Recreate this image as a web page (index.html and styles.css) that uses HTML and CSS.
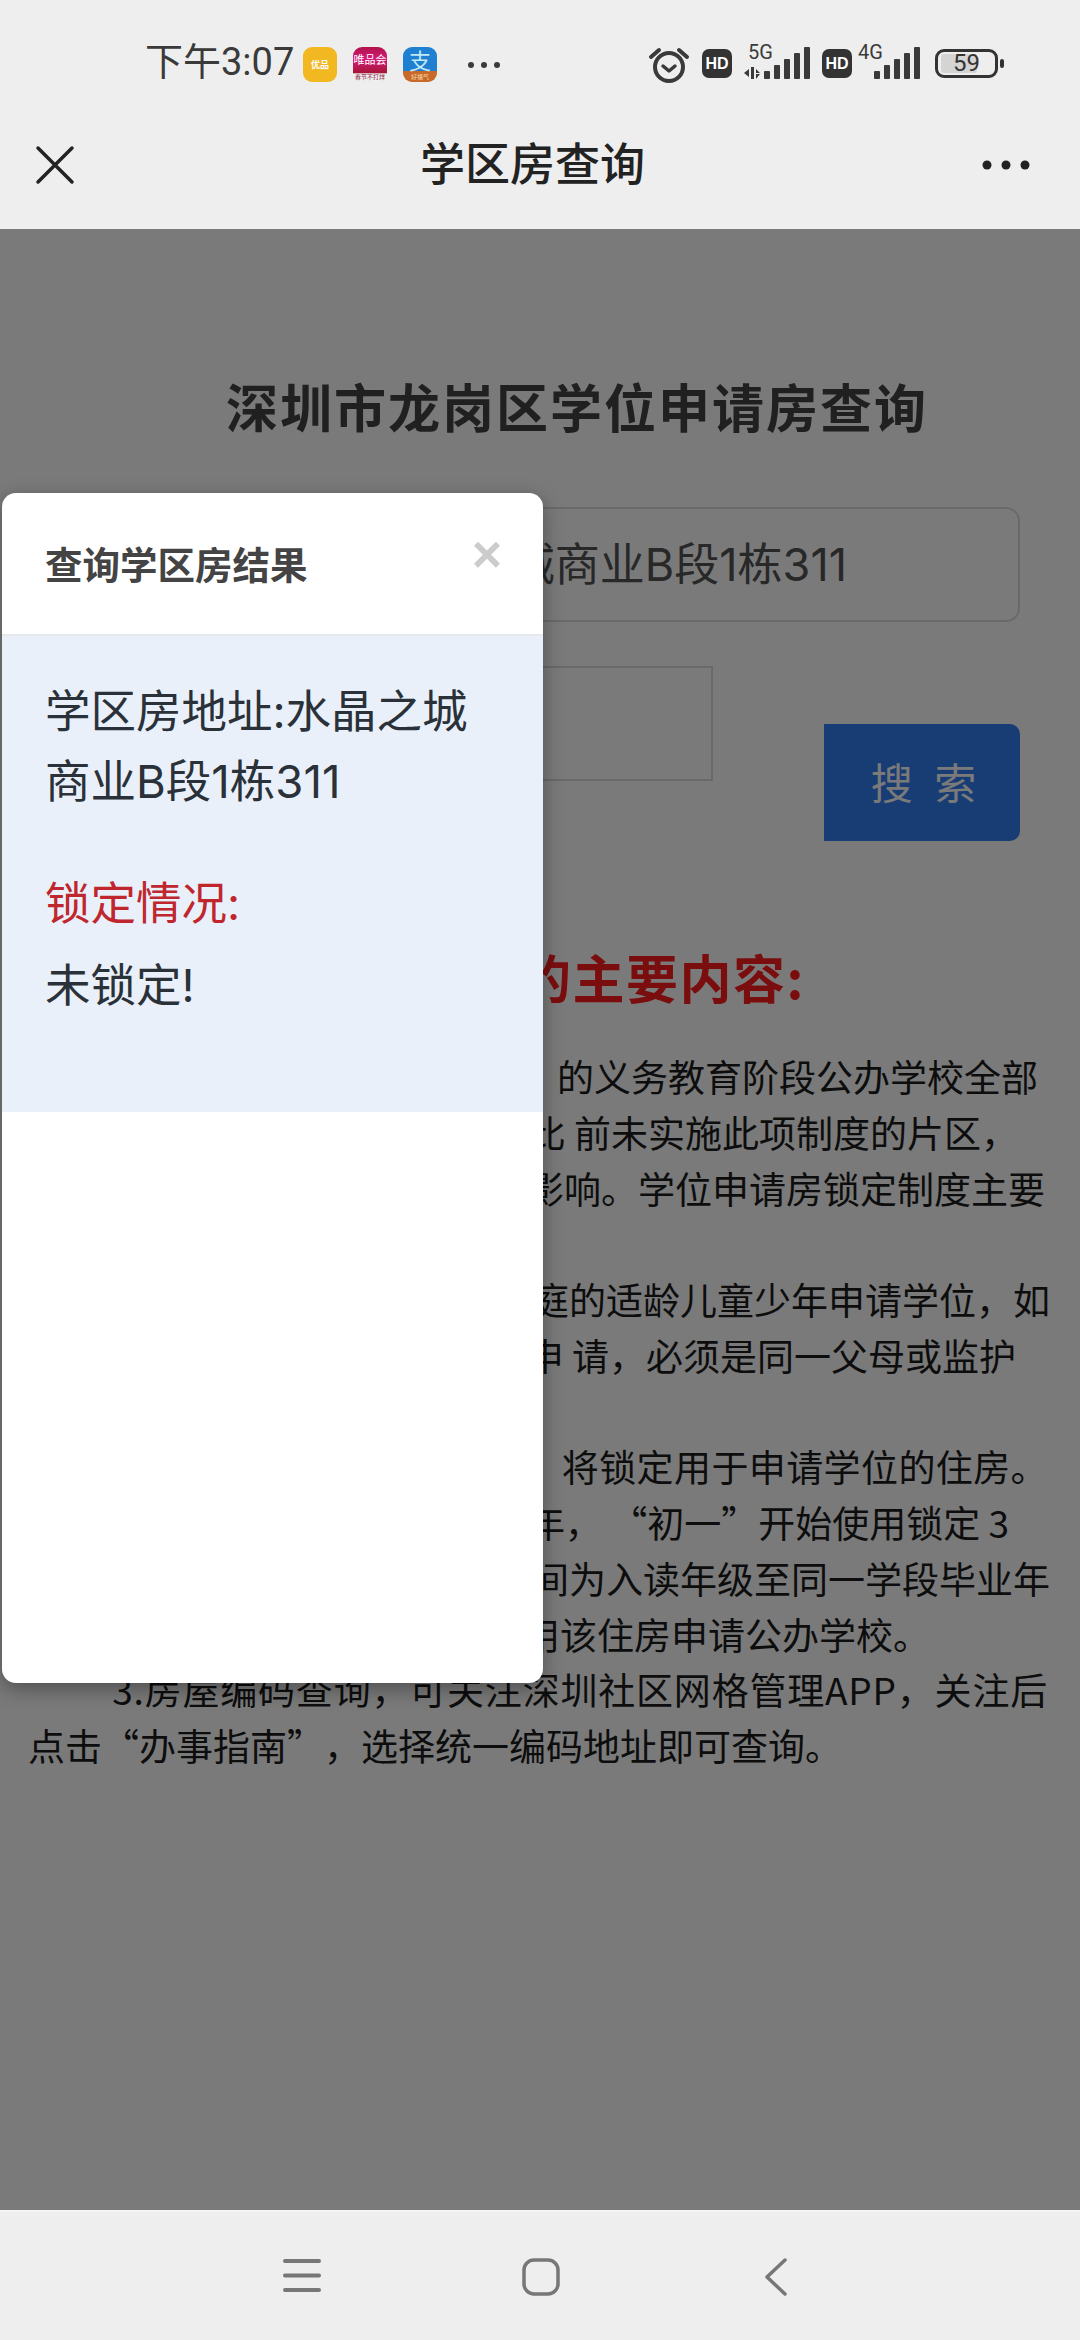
FILE: index.html
```html
<!DOCTYPE html>
<html lang="zh-CN">
<head>
    <meta charset="UTF-8">
    <meta name="viewport" content="width=device-width, initial-scale=1.0">
    <title>学区房查询</title>
    <link rel="stylesheet" href="styles.css">
</head>
<body>
    <div class="top_area">
        <div class="status_bar">
            <div class="status_left">
                <span class="clock">下午3:07</span>
                <div class="app_icon app_yellow"><span>优品</span></div>
                <div class="app_icon app_vip"><span class="vip_name">唯品会</span><span class="vip_sub">春节不打烊</span></div>
                <div class="app_icon app_ali"><span class="ali_name">支</span><span class="ali_sub">好福气</span></div>
                <svg class="more_dots" width="34" height="8" viewBox="0 0 34 8"><circle cx="4" cy="4" r="3"/><circle cx="17" cy="4" r="3"/><circle cx="30" cy="4" r="3"/></svg>
            </div>
            <div class="status_right">
                <svg class="alarm" width="42" height="40" viewBox="0 0 42 40" fill="none" stroke="#3a3a3a">
                    <circle cx="21" cy="22" r="14" stroke-width="4"/>
                    <path d="M15 21l6 5 6-5" stroke-width="3.5" stroke-linecap="round" stroke-linejoin="round"/>
                    <path d="M3 12l8-7M39 12l-8-7" stroke-width="4" stroke-linecap="round"/>
                </svg>
                <span class="hd_badge">HD</span>
                <div class="signal sig_5g">
                    <span class="net_name">5G</span>
                    <svg width="66" height="32" viewBox="0 0 66 32"><path d="M0 26l5-4v8zM7 20h3v12H7zM12 22l4 4h-4zM12 32v-5l4 0z" fill="#3a3a3a"/><rect x="20" y="24" width="6" height="8" rx="1"/><rect x="30" y="18" width="6" height="14" rx="1"/><rect x="40" y="12" width="6" height="20" rx="1"/><rect x="50" y="6" width="6" height="26" rx="1"/><rect x="60" y="0" width="6" height="32" rx="1"/></svg>
                </div>
                <span class="hd_badge">HD</span>
                <div class="signal sig_4g">
                    <span class="net_name">4G</span>
                    <svg width="47" height="32" viewBox="0 0 47 32"><rect x="0" y="24" width="6" height="8" rx="1"/><rect x="10" y="18" width="6" height="14" rx="1"/><rect x="20" y="12" width="6" height="20" rx="1"/><rect x="30" y="6" width="6" height="26" rx="1"/><rect x="40" y="0" width="6" height="32" rx="1"/></svg>
                </div>
                <div class="battery">
                    <div class="battery_body"><div class="battery_fill"></div><span>59</span></div>
                    <div class="battery_nub"></div>
                </div>
            </div>
        </div>
        <div class="title_bar">
            <svg width="40" height="40" viewBox="0 0 40 40" stroke="#222" stroke-width="3.5" stroke-linecap="round"><path d="M3 3l34 34M37 3L3 37"/></svg>
            <h2>学区房查询</h2>
            <svg width="48" height="10" viewBox="0 0 48 10" fill="#222"><circle cx="5" cy="5" r="4.5"/><circle cx="24" cy="5" r="4.5"/><circle cx="43" cy="5" r="4.5"/></svg>
        </div>
    </div>

    <div class="page">
        <h1>深圳市龙岗区学位申请房查询</h1>
        <div class="addr_input">城商业B段1栋311</div>
        <div class="search_row">
            <div class="code_input"></div>
            <button class="search_btn">搜 索</button>
        </div>
        <h3 class="red_title">的主要内容:</h3>
        <div class="content">
            <div class="ln ln0">的义务教育阶段公办学校全部</div>
            <div class="ln ln1">比 前未实施此项制度的片区，</div>
            <div class="ln ln2">影响。学位申请房锁定制度主要</div>
            <div class="ln"></div>
            <div class="ln ln4">庭的适龄儿童少年申请学位，如</div>
            <div class="ln ln5">申 请，必须是同一父母或监护</div>
            <div class="ln"></div>
            <div class="ln ln7">将锁定用于申请学位的住房。</div>
            <div class="ln ln8">年， “初一”开始使用锁定 3</div>
            <div class="ln ln9">间为入读年级至同一学段毕业年</div>
            <div class="ln ln10">用该住房申请公办学校。</div>
            <div class="ln ln11">3.房屋编码查询，可关注深圳社区网格管理APP，关注后</div>
            <div class="ln ln12">点击“办事指南”，选择统一编码地址即可查询。</div>
        </div>

        <div class="mask"></div>
        <div class="result_modal">
            <div class="modal_head">
                <h4>查询学区房结果</h4>
                <span class="close_x">×</span>
            </div>
            <div class="modal_body">
                <p>学区房地址:水晶之城<br>商业B段1栋311</p>
                <p class="lock_label">锁定情况:</p>
                <p class="lock_value">未锁定!</p>
            </div>
        </div>
    </div>

    <div class="nav_bar">
        <svg width="38" height="34" viewBox="0 0 38 34" stroke="#777" stroke-width="4" stroke-linecap="round"><path d="M2 3h34M2 17.500h34M2 32h34"/></svg>
        <svg class="nav_home" width="38" height="38" viewBox="0 0 38 38" fill="none" stroke="#777" stroke-width="3.5"><rect x="2" y="2" width="34" height="34" rx="10"/></svg>
        <svg class="nav_back" width="22" height="38" viewBox="0 0 22 38" fill="none" stroke="#777" stroke-width="3.5" stroke-linecap="round" stroke-linejoin="round"><path d="M20 2L2 19l18 17"/></svg>
    </div>
</body>
</html>
```

FILE: styles.css
```css
* {
    margin: 0;
    padding: 0;
    box-sizing: border-box;
}

body {
    width: 1080px;
    height: 2340px;
    display: flex;
    flex-direction: column;
    overflow: hidden;
    background-color: #eeeeee;
    font-family: "Noto Sans CJK SC", "Noto Sans", sans-serif;
}

/* top bars */
.top_area {
    height: 229px;
    background-color: #eeeeee;
}

.status_bar {
    height: 126px;
    padding: 47px 0 0 145px;
    display: flex;
    justify-content: space-between;
}

.status_left {
    display: flex;
    height: 35px;
    align-items: center;
}

.clock {
    width: 158px;
    margin-top: -5px;
    font-family: "Roboto", "Noto Sans CJK SC", sans-serif;
    font-size: 38px;
    line-height: 44px;
    color: #3a3a3a;
    white-space: nowrap;
}

.app_icon {
    width: 34px;
    height: 35px;
    margin-right: 16px;
    border-radius: 9px;
    display: flex;
    flex-direction: column;
    align-items: center;
    justify-content: center;
    color: white;
    white-space: nowrap;
}

.app_yellow {
    background-color: #f2b821;
    font-size: 9px;
    font-weight: 700;
}

.app_vip {
    background-color: #b5174f;
    background-image: linear-gradient(#b0124a, #d21c7a 35%, #a51535 75%, #eeeeee 76%);
}

.vip_name {
    font-size: 11px;
    line-height: 20px;
    margin-top: 2px;
}

.vip_sub {
    font-size: 6px;
    line-height: 10px;
    margin-top: 3px;
    color: #8a2040;
}

.app_ali {
    background-image: linear-gradient(#1f7fd0 68%, #c8692a 68%);
}

.ali_name {
    font-size: 22px;
    line-height: 25px;
    color: #bfeaf5;
}

.ali_sub {
    font-size: 6px;
    line-height: 10px;
    color: #f5d9a0;
}

.more_dots {
    margin-left: 14px;
    fill: #3a3a3a;
}

.status_right {
    display: flex;
    align-items: flex-start;
    width: 432px;
}

.alarm {
    margin-top: -2px;
}

.hd_badge {
    width: 30px;
    height: 29px;
    margin: 2px 0 0 12px;
    border-radius: 7px;
    background-color: #333333;
    color: white;
    font-family: "Liberation Sans", sans-serif;
    font-size: 16px;
    font-weight: 700;
    line-height: 29px;
    text-align: center;
}

.signal {
    position: relative;
    height: 32px;
    margin-left: 12px;
}

.signal svg {
    display: block;
    fill: #3a3a3a;
}

.sig_4g {
    margin-left: 22px;
}

.net_name {
    position: absolute;
    top: -7px;
    left: 4px;
    font-family: "Roboto", sans-serif;
    font-size: 20px;
    line-height: 24px;
    color: #3a3a3a;
}

.sig_4g .net_name {
    left: -16px;
}

.battery {
    display: flex;
    align-items: center;
    margin: 2px 0 0 14px;
}

.battery_body {
    position: relative;
    width: 63px;
    height: 29px;
    border: 3px solid #333333;
    border-radius: 9px;
    text-align: center;
    font-family: "Roboto", sans-serif;
    font-size: 24px;
    line-height: 23px;
    color: #333333;
}

.battery_fill {
    position: absolute;
    top: 2px;
    bottom: 2px;
    left: 3px;
    width: 36px;
    border-radius: 3px;
    background-color: #d4d4d4;
}

.battery_body span {
    position: relative;
}

.battery_nub {
    width: 4px;
    height: 9px;
    margin-left: 2px;
    border-radius: 2px;
    background-color: #333333;
}

.title_bar {
    height: 102px;
    padding: 0 50px 0 35px;
    display: flex;
    align-items: center;
    justify-content: space-between;
    margin-top: -12px;
}

.title_bar h2 {
    margin: -8px 0 0 8px;
    font-size: 45px;
    font-weight: 500;
    color: #222222;
}

/* page under the mask */
.page {
    position: relative;
    height: 1981px;
    padding-top: 147px;
    background-color: white;
}

.page h1 {
    margin-left: 226px;
    font-size: 52px;
    font-weight: 700;
    line-height: 60px;
    letter-spacing: 2px;
    color: #444444;
    white-space: nowrap;
}

.addr_input {
    width: 992px;
    height: 115px;
    margin: 71px 0 0 28px;
    padding-right: 171px;
    border: 2px solid #dcdcdc;
    border-radius: 14px;
    text-align: right;
    font-family: "Inter", "Noto Sans CJK SC", sans-serif;
    font-size: 45px;
    line-height: 112px;
    color: #555555;
}

.search_row {
    display: flex;
    height: 175px;
    margin: 44px 0 0 28px;
}

.code_input {
    width: 685px;
    height: 115px;
    border: 2px solid #dcdcdc;
}

.search_btn {
    width: 196px;
    height: 117px;
    margin: 58px 0 0 111px;
    padding: 0 0 4px 9px;
    border: none;
    border-radius: 0 10px 10px 0;
    background-color: #3380f5;
    color: white;
    font-family: inherit;
    font-size: 42px;
    letter-spacing: 6px;
}

.red_title {
    height: 60px;
    margin-top: 106px;
    padding-right: 275px;
    text-align: right;
    font-size: 52px;
    font-weight: 700;
    line-height: 60px;
    letter-spacing: 1.5px;
    color: #ff1e20;
    white-space: nowrap;
}

.content {
    margin-top: 42px;
    font-size: 37px;
    line-height: 55.75px;
    color: #1c1c1c;
    text-spacing-trim: space-all;
}

.ln {
    display: flex;
    justify-content: flex-end;
    min-height: 55.75px;
    white-space: pre;
}

.ln0 { padding-right: 42px; }
.ln1 { padding-right: 62px; }
.ln2 { padding-right: 35px; }
.ln4 { padding-right: 30px; }
.ln5 { padding-right: 64px; }
.ln7 { padding-right: 32px; letter-spacing: 0.4px; }
.ln8 { padding-right: 71px; }
.ln9 { padding-right: 30px; }
.ln10 { padding-right: 150px; }
.ln11 { padding-right: 32px; letter-spacing: 0.8px; }
.ln12 { justify-content: flex-start; padding-left: 28px; }

.mask {
    position: absolute;
    top: 0;
    right: 0;
    bottom: 0;
    left: 0;
    background-color: rgba(0, 0, 0, 0.52);
}

/* result popup */
.result_modal {
    position: absolute;
    top: 264px;
    left: 2px;
    width: 541px;
    height: 1190px;
    border-radius: 14px;
    overflow: hidden;
    background-color: white;
    box-shadow: 0 6px 20px rgba(0, 0, 0, 0.35);
}

.modal_head {
    height: 143px;
    padding: 0 41px 0 43px;
    display: flex;
    justify-content: space-between;
    border-bottom: 2px solid #e5e9ee;
}

.modal_head h4 {
    margin-top: 43px;
    font-size: 37.500px;
    font-weight: 700;
    line-height: 54px;
    color: #444444;
}

.close_x {
    margin-top: 38px;
    font-family: "Liberation Sans", sans-serif;
    font-size: 52px;
    font-weight: 700;
    line-height: 46px;
    color: #cccccc;
}

.modal_body {
    height: 476px;
    padding: 41px 0 0 43px;
    background-color: #e9f0fa;
    font-family: "Inter", "Noto Sans CJK SC", sans-serif;
    font-size: 45.500px;
    line-height: 70px;
    color: #2a3138;
}

.lock_label {
    margin-top: 52px;
    color: #c0262d;
}

.lock_value {
    margin-top: 12px;
}

/* bottom buttons */
.nav_bar {
    height: 130px;
    padding: 46px 0 0 283px;
    display: flex;
    align-items: flex-start;
    background-color: #eeeeee;
    border-top: 2px solid #f4f4f4;
}

.nav_home {
    margin-left: 201px;
}

.nav_back {
    margin-left: 205px;
}
```
